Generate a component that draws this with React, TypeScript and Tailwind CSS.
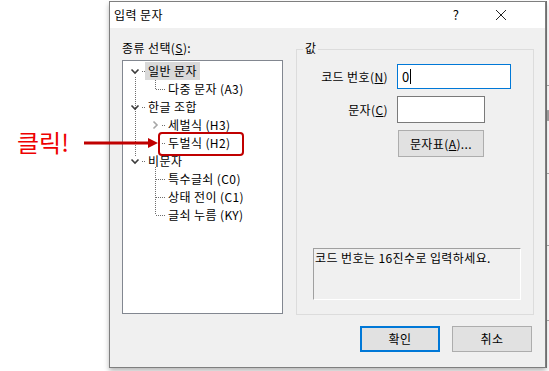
import React from "react";

const FONT = { fontFamily: '"Noto Sans CJK KR", "Noto Sans", sans-serif' };

type Row = { label: string; level: 0 | 1; chevron?: "down" | "right"; selected?: boolean };

const ROWS: Row[] = [
    { label: "일반 문자", level: 0, chevron: "down", selected: true },
    { label: "다중 문자 (A3)", level: 1 },
    { label: "한글 조합", level: 0, chevron: "down" },
    { label: "세벌식 (H3)", level: 1, chevron: "right" },
    { label: "두벌식 (H2)", level: 1 },
    { label: "비문자", level: 0, chevron: "down" },
    { label: "특수글쇠 (C0)", level: 1 },
    { label: "상태 전이 (C1)", level: 1 },
    { label: "글쇠 누름 (KY)", level: 1 },
];

function Chevron({ dir }: { dir: "down" | "right" }) {
    if (dir === "down") {
        return (
            <svg width="12" height="18" viewBox="0 0 12 18">
                <path d="M2.5 7.5 L6 11 L9.5 7.5" fill="none" stroke="#3c3c3c" strokeWidth="1.6" />
            </svg>
        );
    }
    return (
        <svg width="12" height="18" viewBox="0 0 12 18">
            <path d="M4.5 5.5 L8 9 L4.5 12.5" fill="none" stroke="#a6a6a6" strokeWidth="1.6" />
        </svg>
    );
}

function TreeLines() {
    const dot = { stroke: "#6e6e6e", strokeWidth: 1, strokeDasharray: "1 1", shapeRendering: "crispEdges" as const };
    return (
        <svg className="absolute left-0 top-0 pointer-events-none" width="160" height="252">
            <line x1="12.5" y1="16" x2="12.5" y2="95" {...dot} />
            <line x1="19" y1="10.5" x2="22" y2="10.5" {...dot} />
            <line x1="19" y1="46.5" x2="22" y2="46.5" {...dot} />
            <line x1="19" y1="100.5" x2="22" y2="100.5" {...dot} />
            <line x1="32.5" y1="19" x2="32.5" y2="28" {...dot} />
            <line x1="33" y1="28.5" x2="43" y2="28.5" {...dot} />
            <line x1="39" y1="64.5" x2="42" y2="64.5" {...dot} />
            <line x1="39" y1="82.5" x2="42" y2="82.5" {...dot} />
            <line x1="32.5" y1="106" x2="32.5" y2="154" {...dot} />
            <line x1="33" y1="118.5" x2="43" y2="118.5" {...dot} />
            <line x1="33" y1="136.5" x2="43" y2="136.5" {...dot} />
            <line x1="33" y1="154.5" x2="43" y2="154.5" {...dot} />
        </svg>
    );
}

export default function App() {
    return (
        <div className="relative w-[549px] h-[371px] bg-white overflow-hidden text-[12px] tracking-[0.4px] text-black" style={FONT}>
            <div className="flex">
                <div className="w-[109px] shrink-0 pt-[126px] pl-[17px]">
                    <p className="text-[24px] leading-[32px] tracking-normal text-[#ee0000] font-normal">클릭!</p>
                </div>

                <div className="mt-[1px] w-[437px] h-[367px] shrink-0 border border-[#7f7f7f] bg-[#f0f0f0] flex flex-col shadow-[0_3px_5px_rgba(0,0,0,0.28)]">
                    <div className="h-[26px] bg-white flex items-center pl-[4px] pr-[38px]">
                        <span className="flex-1 leading-[16px]">입력 문자</span>
                        <span className="w-[20px] text-center text-[13px] leading-[16px]">?</span>
                        <svg width="12" height="12" viewBox="0 0 12 12" className="ml-[29px]">
                            <path d="M1 1 L11 11 M11 1 L1 11" stroke="#222" strokeWidth="1" />
                        </svg>
                    </div>

                    <div className="flex pl-[12px] pt-[12px]">
                        <div className="w-[161px] shrink-0">
                            <p className="leading-[16px] h-[20px]">종류 선택(<span className="underline">S</span>):</p>
                            <div className="relative h-[254px] border border-[#828790] bg-white pt-[1px]">
                                <TreeLines />
                                {ROWS.map((r) => (
                                    <div key={r.label} className={`relative flex items-center h-[18px] ${r.level === 0 ? "pl-[6px]" : "pl-[26px]"}`}>
                                        <div className="w-[12px] h-[18px]">{r.chevron && <Chevron dir={r.chevron} />}</div>
                                        <div className="w-[4px]" />
                                        <span className={`px-[3px] h-[18px] leading-[18px] whitespace-nowrap ${r.selected ? "bg-[#d9d9d9]" : ""}`}>{r.label}</span>
                                    </div>
                                ))}
                            </div>
                        </div>

                        <div className="relative ml-[13px] mt-[9px] w-[238px] h-[266px] border border-[#dcdcdc]">
                            <span className="absolute -top-[10px] left-[6px] px-[2px] bg-[#f0f0f0] leading-[16px]">값</span>
                            <div className="flex items-center mt-[14px]">
                                <span className="w-[91px] text-right leading-[16px]">코드 번호(<span className="underline">N</span>)</span>
                                <div className="ml-[9px] w-[114px] h-[25px] border border-[#0078d7] bg-white flex items-center pl-[4px]">
                                    <span className="leading-[16px] text-[13px]">0</span>
                                    <span className="w-[1px] h-[15px] bg-black" />
                                </div>
                            </div>
                            <div className="flex items-center mt-[7px]">
                                <span className="w-[91px] text-right leading-[16px]">문자(<span className="underline">C</span>)</span>
                                <div className="ml-[9px] w-[88px] h-[27px] border border-[#7a7a7a] bg-white" />
                            </div>
                            <div className="mt-[7px] ml-[101px] w-[86px] h-[27px] border border-[#adadad] bg-[#e1e1e1] flex items-center justify-center leading-[16px]">
                                문자표(<span className="underline">A</span>)...
                            </div>
                            <div className="mt-[91px] ml-[16px] w-[208px] h-[52px] border border-t-[#a0a0a0] border-l-[#a0a0a0] border-r-white border-b-white pl-[1px] pt-[1px]">
                                <p className="leading-[16px] whitespace-nowrap">코드 번호는 16진수로 입력하세요.</p>
                            </div>
                        </div>
                    </div>

                    <div className="flex justify-end gap-[12px] pr-[13px] mt-[11px]">
                        <div className="w-[80px] h-[26px] border-2 border-[#0078d7] bg-[#e1e1e1] flex items-center justify-center leading-[16px]">확인</div>
                        <div className="w-[80px] h-[26px] border border-[#adadad] bg-[#e1e1e1] flex items-center justify-center leading-[16px]">취소</div>
                    </div>
                </div>

                <div className="flex-1 flex flex-col border-l border-[#6e6e6e] mt-[1px]">
                    <div className="h-[84px]" />
                    <div className="h-[25px] border-t border-[#a0a0a0]" />
                    <div className="h-[10px] border-t border-[#a0a0a0] bg-[#9a9a9a]" />
                    <div className="h-[53px] border-t border-[#a0a0a0]" />
                    <div className="h-[72px] border-t border-[#a0a0a0]" />
                    <div className="h-[75px] border-t border-[#a0a0a0]" />
                    <div className="flex-1 border-t border-[#a0a0a0]" />
                </div>
            </div>

            <div className="absolute left-[158px] top-[132px] w-[86px] h-[24px] border-2 border-[#c00000] rounded-[4px]" />
            <svg className="absolute left-[84px] top-[137px]" width="76" height="12" viewBox="0 0 76 12">
                <line x1="0" y1="6" x2="66" y2="6" stroke="#c00000" strokeWidth="3" />
                <path d="M64 1 L74 6 L64 11 Z" fill="#c00000" />
            </svg>
        </div>
    );
}
